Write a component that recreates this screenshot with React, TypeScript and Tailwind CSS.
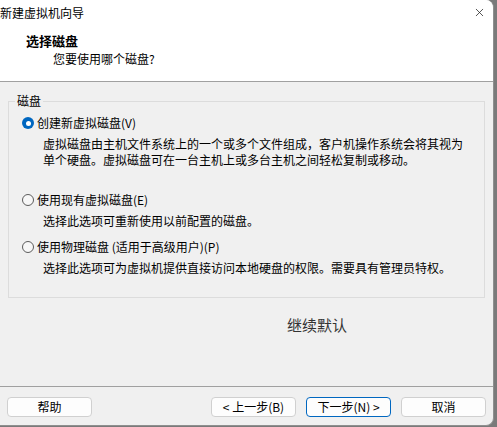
import { X } from "lucide-react";

const font = { fontFamily: '"Noto Sans CJK SC", "Noto Sans", sans-serif' };

function Radio({ checked }: { checked?: boolean }) {
  return checked ? (
    <span className="flex h-[12px] w-[12px] items-center justify-center rounded-full bg-[#0067c0]">
      <span className="h-[5px] w-[5px] rounded-full bg-white" />
    </span>
  ) : (
    <span className="h-[12px] w-[12px] rounded-full border border-[#5c5c5c] bg-[#f7f7f7]" />
  );
}

function Option({
  label,
  checked,
  lines,
  className,
}: {
  label: string;
  checked?: boolean;
  lines: string[];
  className: string;
}) {
  return (
    <div className={className}>
      <div className="flex h-[16px] items-center gap-[3px] pl-[7px] leading-[16px]">
        <Radio checked={checked} />
        <span>{label}</span>
      </div>
      <div className="mt-[5px] pl-[28px]">
        {lines.map((line, i) => (
          <div key={i} className="h-[16px] whitespace-nowrap leading-[16px]">
            {line}
          </div>
        ))}
      </div>
    </div>
  );
}

function Button({ children, primary }: { children: string; primary?: boolean }) {
  return (
    <button
      className={
        "flex h-[20px] w-[85px] items-center justify-center rounded-[4px] bg-[#fdfdfd] text-[12px] leading-none text-black " +
        (primary ? "border border-[#0067c0]" : "border border-[#d0d0d0]")
      }
    >
      {children}
    </button>
  );
}

export default function App() {
  return (
    <div className="flex h-[427px] w-[497px] flex-col bg-[#7a7a7a]" style={font}>
      <div className="flex h-[426px] w-[494px] flex-col overflow-hidden rounded-tr-[8px] rounded-br-[8px] border-r border-b border-[#8f8f8f] bg-[#f0f0f0] text-[12px] text-black">
        {/* header */}
        <div className="h-[82px] border-b border-[#a0a0a0] bg-white">
          <div className="flex h-[25px] items-center justify-between">
            <span className="leading-[16px]">新建虚拟机向导</span>
            <X className="mr-[7px] h-[13px] w-[13px] text-[#222]" strokeWidth={1.4} />
          </div>
          <div className="mt-[8px] pl-[26px] text-[13px] font-bold leading-[16px]">选择磁盘</div>
          <div className="mt-[2px] pl-[53px] leading-[16px]">您要使用哪个磁盘?</div>
        </div>

        {/* body */}
        <div className="h-[304px] pt-[11px]">
          <fieldset className="ml-[8px] w-[477px] border border-[#dcdcdc] pr-[6px] pb-[21px] pl-[6px]">
            <legend className="px-[2px] leading-[16px]">磁盘</legend>
            <Option
              className="mt-[6px]"
              checked
              label="创建新虚拟磁盘(V)"
              lines={[
                "虚拟磁盘由主机文件系统上的一个或多个文件组成，客户机操作系统会将其视为",
                "单个硬盘。虚拟磁盘可在一台主机上或多台主机之间轻松复制或移动。",
              ]}
            />
            <Option
              className="mt-[24px]"
              label="使用现有虚拟磁盘(E)"
              lines={["选择此选项可重新使用以前配置的磁盘。"]}
            />
            <Option
              className="mt-[10px]"
              label="使用物理磁盘 (适用于高级用户)(P)"
              lines={["选择此选项可为虚拟机提供直接访问本地硬盘的权限。需要具有管理员特权。"]}
            />
          </fieldset>
          <div className="mt-[17px] ml-[287px] text-[15px] leading-[20px] text-[#333]">继续默认</div>
        </div>

        {/* buttons */}
        <div className="flex h-[39px] items-start border-t border-[#a0a0a0] px-[7px] pt-[10px]">
          <Button>帮助</Button>
          <div className="ml-auto flex gap-[10px]">
            <Button>&lt; 上一步(B)</Button>
            <Button primary>下一步(N) &gt;</Button>
            <Button>取消</Button>
          </div>
        </div>
      </div>
    </div>
  );
}
